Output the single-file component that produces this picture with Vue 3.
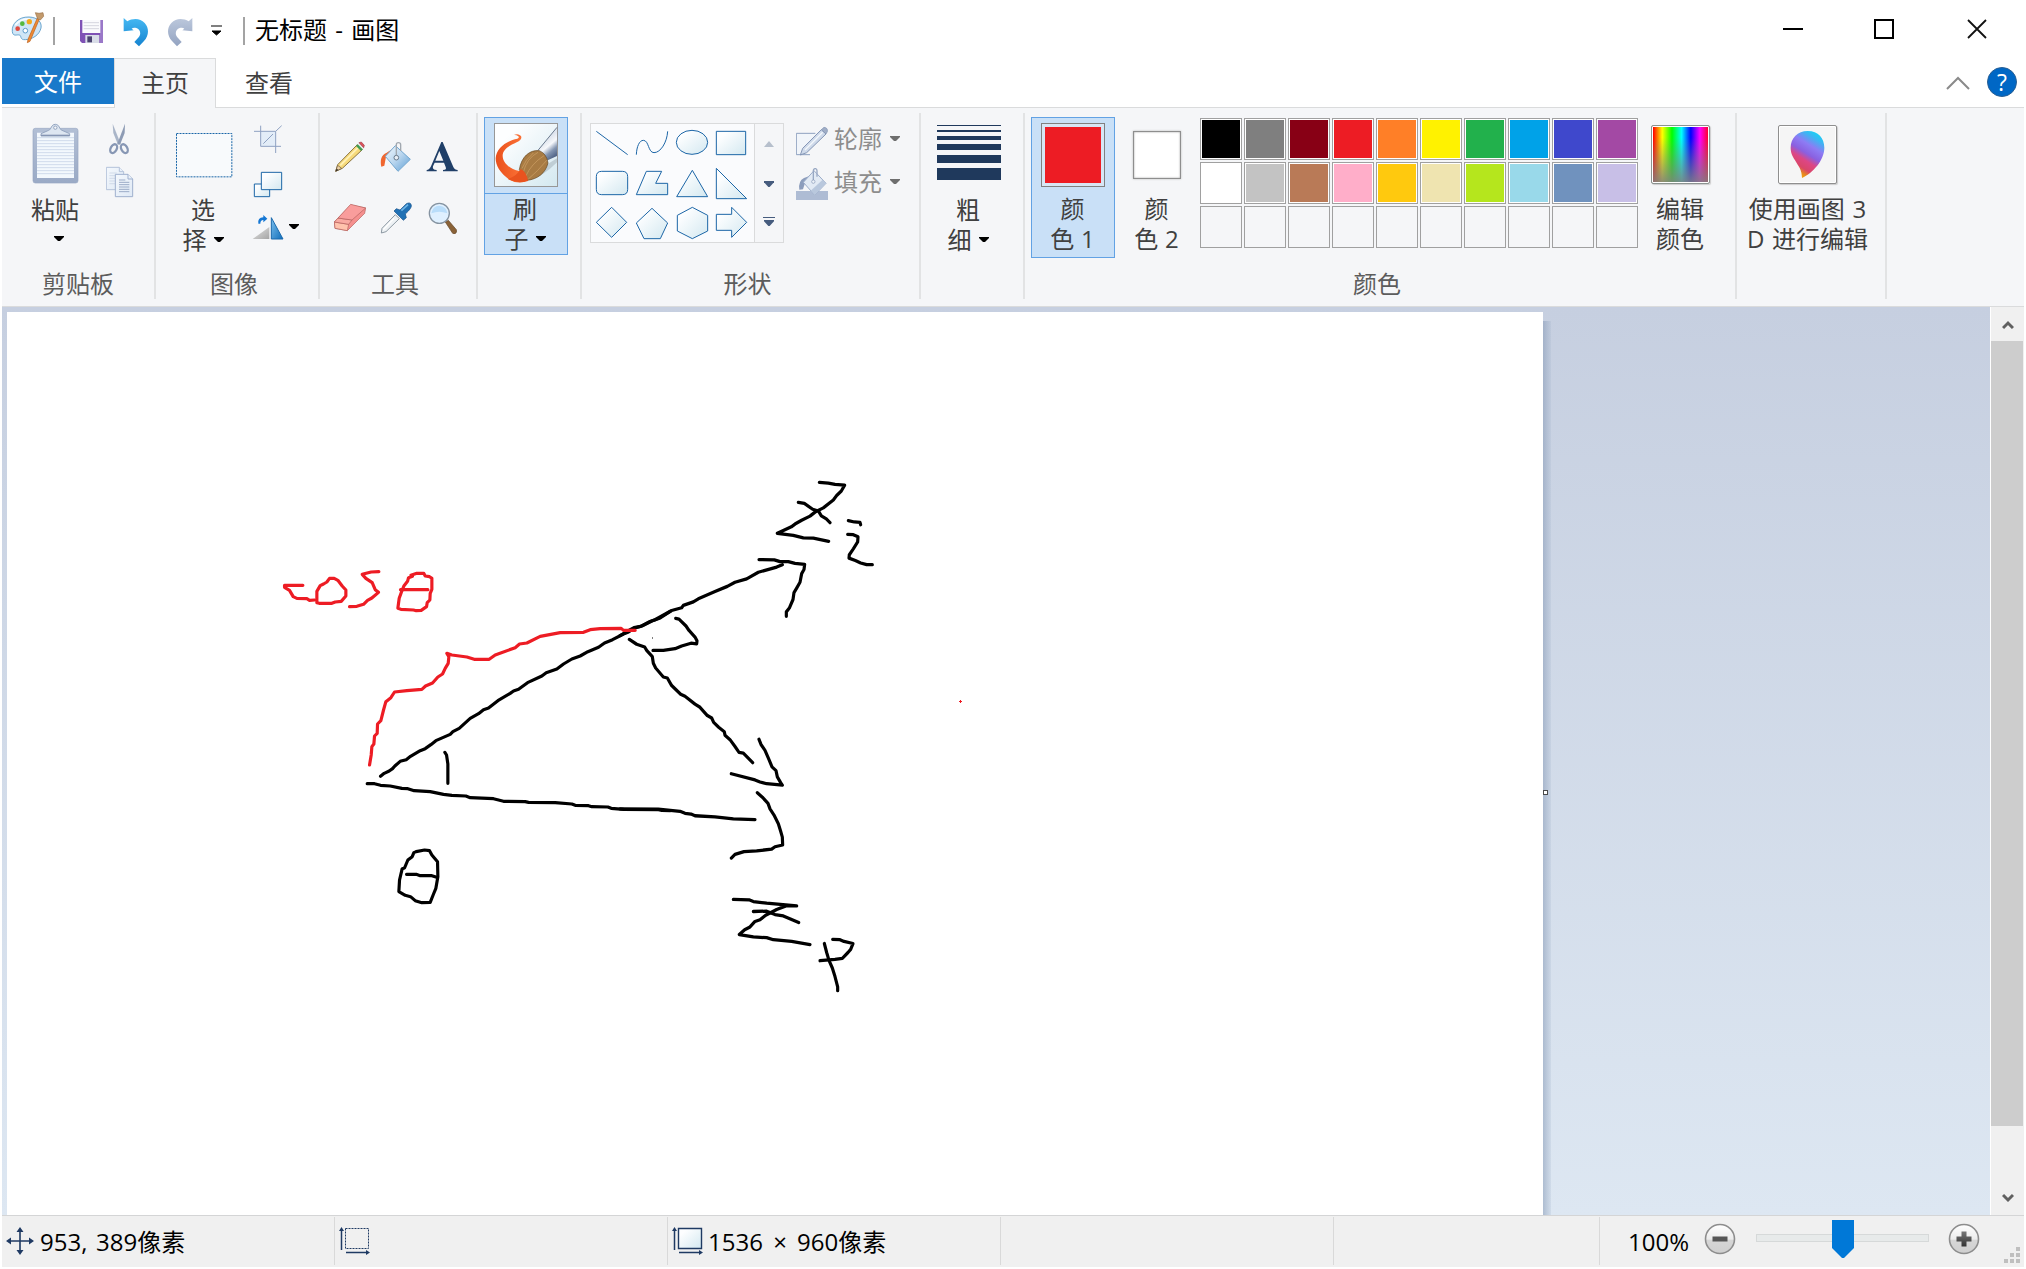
<script setup>
const shapes = [
  { box: '36 57 120 117', d: 'M49 79L143 149', open: true },
  { box: '156 57 120 117', d: 'M169 149C170 125 178 106 190 106C207 106 204 143 222 143C242 143 261 112 263 79', open: true },
  { box: '276 57 120 117', d: 'M289 112A47 36 0 1 1 383 112A47 36 0 1 1 289 112Z' },
  { box: '396 57 120 117', d: 'M409 79H497V149H409Z' },
  { box: '36 174 120 117', d: 'M65 199H127Q143 199 143 215V253Q143 269 127 269H65Q49 269 49 253V215Q49 199 65 199Z' },
  { box: '156 174 120 117', d: 'M199 199H245L227 235H263V269H169Z' },
  { box: '276 174 120 117', d: 'M337 196L383 275H290Z' },
  { box: '396 174 120 117', d: 'M409 190V281H500Z' },
  { box: '36 291 120 117', d: 'M95 307L140 352L95 397L49 352Z' },
  { box: '156 291 120 117', d: 'M216 310L263 354L241 401H192L169 354Z' },
  { box: '276 291 120 117', d: 'M337 307L383 331V378L337 401L292 378V331Z' },
  { box: '396 291 120 117', d: 'M409 328H455V307L500 352L455 397V376H409Z' },
]
const palette = [
  '#000000', '#7f7f7f', '#880015', '#ed1c24', '#ff7f27', '#fff200', '#22b14c', '#00a2e8', '#3f48cc', '#a349a4',
  '#ffffff', '#c3c3c3', '#b97a57', '#ffaec9', '#ffc90e', '#efe4b0', '#b5e61d', '#99d9ea', '#7092be', '#c8bfe7',
  '', '', '', '', '', '', '', '', '', '',
]
const leftInk = [
  '331,709 342,700 357,693 367,686 374,678 390,664 408,659 421,649 450,632 465,626 482,614 497,602 540,583 548,575 567,565 600,535 625,521 640,509 655,504 683,482 720,460 730,453 745,448 772,428 815,408 828,398 860,387 880,372 905,357 930,348 953,335 985,322 1003,309 1027,299 1060,282 1075,276 1091,265 1115,258 1145,243 1170,234 1200,214',
  '291,731 313,731 331,736 360,738 395,745 413,746 432,752 480,755 520,763 545,766 587,768 600,773 670,776 700,784 765,785 775,787 855,788 905,792 915,796 955,797 965,800 1013,801 1023,805 1060,808 1165,809 1175,811 1200,812',
  '524,637 529,645 533,672 533,730',
  '438,935 463,930 478,932 485,945 502,965 503,1010 497,1045 490,1062 480,1087 455,1088 435,1082 421,1070 405,1066 386,1055 388,1020 396,986 403,984 413,960 426,950 431,938 438,935',
  '409,1003 438,1003 450,1007 485,1007 497,1011',
]
const leftRed = [
  '98,136 43,136 43,142 58,151 69,170 80,175 110,176 118,181 133,180',
  '160,132 150,137 140,154 140,188 147,190 185,190 195,186 213,184 227,168 227,150 216,138 203,121 192,115 178,115 170,126 160,132',
  '326,95 303,96 276,103 287,115 306,128 315,149 325,157 305,174 292,181 280,193 260,199 238,200',
  '427,109 415,113 412,124 401,138 393,158 387,175 383,205 392,208 430,210 438,212 453,211 469,200 471,188 479,180 480,160 485,148 485,115 478,110 465,108 461,100 440,100 422,106',
  '391,149 473,149',
  '298,675 303,645 305,620 311,612 313,588 321,580 322,552 332,542 340,510 347,485 362,473 373,456 410,452 455,448 466,438 487,429 503,411 517,402 525,385 534,370 536,350 530,340 545,345 590,351 612,358 657,358 675,345 735,323 748,312 770,309 810,289 870,278 940,277 960,269 990,266 1053,265 1060,271 1095,271',
]
const rightInk = [
  '0,510 25,496 42,487 62,483 90,469 105,464 155,437 185,429 190,422 220,412 235,403 285,382 322,367 345,355 380,345 415,326 470,311 487,304',
  '417,289 463,290 480,295 505,295 525,300 554,303 552,318 545,330 540,355 530,372 522,385 519,405 508,430 499,441 499,454',
  '598,65 625,67 645,71 674,73 664,90 650,103 640,116 610,139 587,150 570,163 545,175 525,186 514,194 490,205 472,213 520,219 550,226 580,227 626,236',
  '535,123 553,126 578,143 595,148 604,162 619,171 630,182',
  '685,176 703,180 720,181 722,188',
  '683,216 700,217 714,223 713,238 700,258 688,275 687,285 706,292 722,299 740,304 757,304',
  '167,460 177,462 198,482 207,495 225,514 231,525 230,534 213,532 185,540 165,548 130,553 99,553',
  '28,521 50,535 74,543 80,553 97,571 100,590 107,604 130,630 142,633 155,655 182,680 195,686 225,709 240,718 262,742 275,749 281,762 296,776 313,789 315,799 330,812 345,832 357,849 370,851 398,879',
  '417,811 423,826 435,843 447,870 456,891 468,902 472,920 482,937 487,944 440,940 420,935 405,929 334,911',
  '412,966 427,979 444,997 450,1013 462,1031 475,1056 482,1078 487,1095 488,1118 465,1123 455,1130 410,1135 372,1137 345,1145 334,1156',
  '0,1013 115,1014 180,1020 195,1026 213,1028 225,1033 285,1036 340,1042 405,1044',
  '340,1276 387,1277 400,1282 440,1287 530,1295 500,1294 470,1305 437,1322 420,1335 405,1340 390,1356 374,1364 358,1378 400,1385 440,1387 460,1393 515,1398 570,1407',
  '400,1311 440,1310 465,1320 490,1324 536,1343',
  '613,1404 620,1430 627,1453 637,1475 645,1500 653,1530 653,1541',
  '638,1392 660,1393 672,1398 699,1404 692,1421 684,1430 667,1447 645,1450 600,1454',
]
</script>

<template>
  <div class="window">
    <svg class="defs" width="0" height="0">
      <defs>
        <linearGradient id="ice" x1="0" y1="0" x2="1" y2="1"><stop offset="0.2" stop-color="#fdfeff" /><stop offset="1" stop-color="#d3e8f0" /></linearGradient>
        <linearGradient id="paper" x1="0" y1="0" x2="1" y2="1"><stop offset="0" stop-color="#f4f8fd" /><stop offset="1" stop-color="#dfe9f5" /></linearGradient>
        <linearGradient id="board" x1="0" y1="0" x2="0" y2="1"><stop offset="0" stop-color="#b2bfd5" /><stop offset="1" stop-color="#9aaac6" /></linearGradient>
        <linearGradient id="blue" x1="0" y1="0" x2="1" y2="1"><stop offset="0" stop-color="#7cc0ee" /><stop offset="1" stop-color="#0f6db9" /></linearGradient>
        <linearGradient id="undo" x1="0" y1="0" x2="0" y2="1"><stop offset="0" stop-color="#45b8f2" /><stop offset="1" stop-color="#1583d0" /></linearGradient>
        <linearGradient id="redo" x1="0" y1="0" x2="0" y2="1"><stop offset="0" stop-color="#bcc8dc" /><stop offset="1" stop-color="#93a3c1" /></linearGradient>
        <linearGradient id="grey" x1="0" y1="0" x2="1" y2="1"><stop offset="0" stop-color="#e6e6e6" /><stop offset="1" stop-color="#a4a4a4" /></linearGradient>
        <linearGradient id="pail" x1="0" y1="0" x2="1" y2="1"><stop offset="0" stop-color="#f4f9fe" /><stop offset="0.5" stop-color="#b8d5ee" /><stop offset="1" stop-color="#5c9dd3" /></linearGradient>
        <linearGradient id="flame" x1="0" y1="0" x2="1" y2="0"><stop offset="0" stop-color="#ea501c" /><stop offset="1" stop-color="#ff7a3d" /></linearGradient>
        <linearGradient id="steel" gradientUnits="userSpaceOnUse" x1="700" y1="105" x2="738" y2="150"><stop offset="0.1" stop-color="#dfe5ee" /><stop offset="0.4" stop-color="#f6f8fb" /><stop offset="0.7" stop-color="#8496b2" /><stop offset="1" stop-color="#55688a" /></linearGradient>
        <linearGradient id="drop" x1="0.75" y1="0" x2="0.3" y2="1"><stop offset="0" stop-color="#12d6f5" /><stop offset="0.14" stop-color="#3cb6f3" /><stop offset="0.32" stop-color="#8d7cf4" /><stop offset="0.5" stop-color="#8a60e0" /><stop offset="0.64" stop-color="#dd4684" /><stop offset="0.8" stop-color="#d94668" /><stop offset="0.9" stop-color="#e88a1c" /><stop offset="1" stop-color="#f2a80c" /></linearGradient>
        <linearGradient id="knob" x1="0" y1="0" x2="0" y2="1"><stop offset="0" stop-color="#ffffff" /><stop offset="0.5" stop-color="#ececec" /><stop offset="0.55" stop-color="#d6d6d6" /><stop offset="1" stop-color="#cfcfcf" /></linearGradient>
        <linearGradient id="mark" x1="0" y1="0" x2="0" y2="1"><stop offset="0" stop-color="#777" /><stop offset="1" stop-color="#333" /></linearGradient>
      </defs>
    </svg>

    <header class="titlebar">
      <svg class="app-icon" width="34" height="34" viewBox="33 39 102 102">
        <path d="M37 101C34 78 55 56 87 57C114 58 126 73 123 90C118 112 96 124 76 125C58 126 66 113 58 111C50 109 39 117 37 101Z" fill="#cfe6f7" stroke="#6ba6cf" stroke-width="3" />
        <path d="M46 82Q62 60 90 63" fill="none" stroke="#f5fbff" stroke-width="5" />
        <circle cx="53" cy="92" r="7" fill="#e0473d" /><circle cx="67" cy="77" r="7" fill="#55b93f" /><circle cx="88" cy="71" r="8" fill="#f5a81c" /><circle cx="76" cy="98" r="7" fill="#fff" stroke="#5d9ccc" stroke-width="3" />
        <path d="M113 58L119 61L90 130L82 134L84 124Z" fill="#ef8a33" stroke="#b85d1a" stroke-width="2" />
        <path d="M113 63L108 50L106 44L117 46L129 44L131 55L121 66Z" fill="#c39a6c" stroke="#9b7248" stroke-width="2" />
      </svg>
      <i class="bar"></i>
      <svg class="save" width="24" height="24" viewBox="240 60 72 72">
        <path d="M240 60H309V129H246L240 123Z" fill="#7f52b5" /><path d="M300 60H309V129H300Z" fill="#9a78c8" />
        <path d="M247 60H301V99H247Z" fill="#fafafd" /><path d="M251 68H297M251 77H297M251 86H297" stroke="#d5d5df" stroke-width="3" />
        <path d="M256 105H298V129H256Z" fill="#d9dde8" /><path d="M262 109H276V127H262Z" fill="#4b4470" />
      </svg>
      <svg class="undo" width="26" height="30" viewBox="370 51 78 90"><path d="M372 54L383 64C398 55 421 53 435 69C450 86 447 108 433 123L418 139L404 126L417 112C426 101 421 88 410 84C404 82 399 83 396 86L402 91L372 94Z" fill="url(#undo)" /></svg>
      <svg class="redo" width="26" height="30" viewBox="501 51 78 90"><path d="M577 54L566 64C551 55 528 53 514 69C499 86 502 108 516 123L531 139L545 126L532 112C523 101 528 88 539 84C545 82 550 83 553 86L547 91L577 94Z" fill="url(#redo)" /></svg>
      <svg class="more" width="12" height="12" viewBox="0 0 12 12"><path d="M0 1H11M1 6H10L5.500 10Z" stroke="#000" fill="#000" stroke-width="1" /></svg>
      <i class="bar bar2"></i>
      <span class="title">无标题 - 画图</span>
      <svg class="controls" width="206" height="24" viewBox="0 0 206 24">
        <path d="M0 12H20" stroke="#000" stroke-width="2" /><path d="M92 3H110V21H92Z" fill="none" stroke="#000" stroke-width="2" /><path d="M185 3L203 21M203 3L185 21" stroke="#111" stroke-width="1.800" />
      </svg>
    </header>

    <nav class="tabs">
      <span class="tab file">文件</span>
      <span class="tab home">主页</span>
      <span class="tab view">查看</span>
      <svg class="fold" width="24" height="14" viewBox="0 0 24 14"><path d="M1 13L12 2L23 13" fill="none" stroke="#8a8a8a" stroke-width="2" /></svg>
      <span class="help">?</span>
    </nav>

    <section class="ribbon">
      <div class="group clipboard">
        <div class="body">
          <div class="col big paste">
            <svg width="48" height="62" viewBox="96 54 144 186">
              <rect x="99" y="70" width="135" height="164" rx="7" fill="url(#board)" stroke="#98a8c3" stroke-width="2" /><path d="M111 83H222V219H111Z" fill="#f3f8fd" />
              <path d="M111 98H222M111 107H222M111 116H222M111 125H222M111 134H222M111 143H222M111 152H222M111 161H222M111 170H222M111 179H222M111 188H222M111 197H222M111 206H222" stroke="#c7d4e6" stroke-width="2.500" />
              <path d="M123 93V86L146 76C154 74 153 58 166 58C179 58 178 74 186 76L209 86V93Z" fill="#dde6f1" stroke="#94a5c0" stroke-width="3" /><path d="M123 89H209V93H123Z" fill="#8595b3" /><circle cx="166" cy="68" r="5" fill="#f5f6f8" stroke="#94a5c0" stroke-width="3" />
            </svg>
            <span class="txt">粘贴</span>
            <span class="txt"><svg class="arr solo" width="10" height="5" viewBox="0 0 10 5"><path d="M0 0H10V1L6 5H4L0 1Z" /></svg></span>
          </div>
          <div class="col minis">
            <svg width="28" height="33" viewBox="318 51 84 99">
              <path d="M338 56L362 116L354 119L340 84Z" fill="#a9b5c8" /><path d="M375 56L352 116L360 119L374 84Z" fill="#8d9bb4" />
              <g fill="none" stroke="#8797b4" stroke-width="7"><ellipse cx="341" cy="131" rx="9" ry="14" transform="rotate(28 341 131)" /><ellipse cx="373" cy="131" rx="9" ry="14" transform="rotate(-28 373 131)" /></g>
            </svg>
            <svg class="copy" width="28" height="32" viewBox="318 183 84 96">
              <g fill="url(#paper)" stroke="#b4c2da" stroke-width="3"><path d="M319 187H358L371 200V254H319Z" /><path d="M358 187V200H371" /></g>
              <path d="M328 204H350M328 212H345M328 220H345M328 228H345M328 236H345" stroke="#c2cfe1" stroke-width="2" />
              <g fill="url(#paper)" stroke="#9fb0ce" stroke-width="3"><path d="M346 208H384L398 222V275H346Z" /><path d="M384 208V222H398" /></g>
              <path d="M357 225H376M357 232H388M357 239H388M357 246H388M357 253H388M357 260H388" stroke="#8c9dbd" stroke-width="2.500" />
            </svg>
          </div>
        </div>
        <div class="label">剪贴板</div>
      </div>
      <i class="sep"></i>

      <div class="group image">
        <div class="body">
          <div class="col big select">
            <svg width="58" height="62" viewBox="525 54 174 186"><path d="M529.500 85.500H695.500V215.500H529.500Z" fill="#f8fafc" stroke="#1a66a8" stroke-width="3" stroke-dasharray="6 3" /></svg>
            <span class="txt">选</span>
            <span class="txt">择<svg class="arr" width="10" height="5" viewBox="0 0 10 5"><path d="M0 0H10V1L6 5H4L0 1Z" /></svg></span>
          </div>
          <div class="col tools3">
            <svg width="30" height="30" viewBox="759 60 90 90"><path d="M782 79H827V124H782Z" fill="#e3edf8" /><path d="M762 79H827V144M782 62V124H843M827 79L845 62M790 116L819 87" fill="none" stroke="#8fa2c2" stroke-width="3" /></svg>
            <svg class="resize" width="30" height="30" viewBox="759 195 90 90"><g fill="url(#ice)" stroke="#1c66a7" stroke-width="3"><path d="M763 237H809V275H763Z" /><path d="M784 202H845V254H784Z" /></g></svg>
            <span class="rotate">
              <svg width="34" height="28" viewBox="756 324 102 84"><path d="M758 402L808 366V402Z" fill="url(#grey)" /><path d="M814 338L849 402H814Z" fill="url(#blue)" stroke="#1a69ad" stroke-width="3" /><path d="M775 356Q772 338 790 337V330L802 341L790 352V345Q781 345 781 356Z" fill="#1477d4" /></svg>
              <svg class="arr" width="10" height="5" viewBox="0 0 10 5"><path d="M0 0H10V1L6 5H4L0 1Z" /></svg>
            </span>
          </div>
        </div>
        <div class="label shifted">图像</div>
      </div>
      <i class="sep"></i>

      <div class="group tools">
        <div class="body">
          <div class="toolgrid">
            <svg viewBox="72 108 96 96"><path d="M77 199L83 179L142 119L157 134L97 190Z" fill="#f7da7a" stroke="#8a7340" stroke-width="3" /><path d="M91 181L148 124" stroke="#fff2b8" stroke-width="5" /><path d="M77 199L83 181L95 190Z" fill="#ecd2aa" stroke="#6b5637" stroke-width="2" /><path d="M77 199L80 191L85 195Z" fill="#222" /><path d="M138 123L145 116L160 131L153 138Z" fill="#3f9c52" /><path d="M143 118L148 113L163 128L158 133Z" fill="#e8e8e8" /><path d="M147 113L154 111L163 121L161 128Z" fill="#e0525c" stroke="#9c4047" stroke-width="2" /></svg>
            <svg viewBox="208 105 96 96"><path d="M228 140C239 132 247 131 252 126L240 144L226 152L221 179L212 182C208 163 211 146 228 140Z" fill="#f0662f" /><path d="M254 119L299 160L262 196L224 151Z" fill="url(#pail)" stroke="#72a6d0" stroke-width="3" /><path d="M257 149V116Q257 110 263 110Q270 110 270 116V135" fill="none" stroke="#a1a8b0" stroke-width="4" /><circle cx="257" cy="155" r="7" fill="#e8eef5" stroke="#687a8c" stroke-width="3" /></svg>
            <svg viewBox="346 108 96 96"><path d="M396 111L428 186Q432 195 441 195V199H397V195Q409 195 405 186L400 173H372L367 184Q364 195 378 195V199H348V195Q356 195 361 184L392 111ZM386 138L374 167H398Z" fill="#203f68" /></svg>
            <svg viewBox="72 291 96 96"><g stroke="#b3605e" stroke-width="2"><path d="M73 351L122 300L167 309L164 325L112 377L75 370Z" fill="#f5908f" /><path d="M73 351L116 358L112 377L75 370Z" fill="#ffc3ad" /><path d="M73 351L84 339L126 345L116 358Z" fill="#f9aaa2" /><path d="M84 339L122 298L167 309L126 345Z" fill="#f99d9c" /></g></svg>
            <svg viewBox="208 291 96 96"><path d="M212 384L214 370L254 329L266 341L226 380Z" fill="#eef2f5" stroke="#8c98a2" stroke-width="3" /><path d="M218 374L250 340" stroke="#fff" stroke-width="4" /><path d="M250 318L257 311L268 315L287 296Q300 290 302 301Q304 309 284 327L287 338L278 346Z" fill="#2071b5" stroke="#124f88" stroke-width="2" /><path d="M272 317L292 299" stroke="#6db4e6" stroke-width="5" /></svg>
            <svg viewBox="346 291 96 96"><path d="M404 351L413 346L437 374Q440 382 432 387L426 385Z" fill="#8a6238" stroke="#614223" stroke-width="2" /><circle cx="386" cy="325" r="30" fill="#dff0ff" stroke="#8593a1" stroke-width="4" /><path d="M362 325Q366 303 386 302Q408 304 410 325Q386 315 362 325Z" fill="#b9ddfa" /></svg>
          </div>
        </div>
        <div class="label shifted">工具</div>
      </div>
      <i class="sep"></i>

      <div class="group brushes">
        <div class="brush">
          <div class="brush-top">
            <svg width="64" height="64" viewBox="552 54 192 192">
              <rect x="553.500" y="55.500" width="189" height="189" fill="url(#ice)" stroke="#979797" stroke-width="3" />
              <path d="M656 226Q700 214 741 172V160L700 185Z" fill="#9fadb5" opacity="0.500" />
              <path d="M612 90Q624 84 633 93Q638 103 620 112C596 123 578 134 578 152C578 172 598 192 628 198L646 192L654 226Q626 240 598 224C570 204 557 182 557 160C559 130 588 108 622 101Q629 98 625 94Q619 89 612 90Z" fill="url(#flame)" />
              <path d="M684 136L741 67V153L713 166Z" fill="url(#steel)" /><path d="M684 136L741 67" stroke="#6b7b8f" stroke-width="3" />
              <path d="M628 194C634 156 658 134 688 137Q710 146 714 174C706 206 682 222 652 226Z" fill="#a87b43" stroke="#644620" stroke-width="2" />
              <path d="M640 202Q650 160 684 142M647 214Q664 176 702 152M655 222Q684 198 710 166M636 190Q646 164 670 144" fill="none" stroke="#cfa266" stroke-width="2" />
              <path d="M632 192Q650 200 654 228Q622 238 594 222Q620 214 632 192Z" fill="#e9531f" />
            </svg>
          </div>
          <span class="txt">刷</span>
          <span class="txt">子<svg class="arr" width="10" height="5" viewBox="0 0 10 5"><path d="M0 0H10V1L6 5H4L0 1Z" /></svg></span>
        </div>
      </div>
      <i class="sep"></i>

      <div class="group shapes">
        <div class="body">
          <div class="gallery">
            <div class="shape-grid">
              <svg v-for="s in shapes" :key="s.d" width="40" height="39" :viewBox="s.box"><path :d="s.d" :fill="s.open ? 'none' : 'url(#ice)'" stroke="#1c66a7" stroke-width="3" /></svg>
            </div>
            <svg class="scroller" width="28" height="118" viewBox="525 57 84 354"><path d="M552 126L567 108L582 126Z" fill="#b6bfcc" /><path d="M552 228H582V232L569 246H565L552 232Z" fill="#465c7e" /><path d="M549 336H585V339H549ZM552 345H582V349L569 363H565L552 349Z" fill="#465c7e" /></svg>
          </div>
          <div class="options">
            <span class="option">
              <svg width="33" height="33" viewBox="648 60 99 99"><path d="M649 85H706L663 149H649Z" fill="#f1f5fa" /><path d="M706 85H649V149H690" fill="none" stroke="#8ea1c0" stroke-width="3" /><path d="M661 150L668 130L724 74L738 87L680 143Z" fill="#cfdaea" stroke="#8496b6" stroke-width="3" /><path d="M675 135L728 82" stroke="#f3f7fc" stroke-width="4" /><path d="M724 74L732 67Q744 68 742 80L738 87Z" fill="#a0aec7" stroke="#7f91b1" stroke-width="2" /></svg>
              <span class="opt-text">轮廓</span><svg class="arr dim" width="10" height="5" viewBox="0 0 10 5"><path d="M0 0H10V1L6 5H4L0 1Z" /></svg>
            </span>
            <span class="option fill">
              <svg width="33" height="33" viewBox="648 186 99 99"><path d="M648 255H744V282H648Z" fill="#aebcd4" /><path d="M672 216Q690 210 696 204L676 228L669 250L658 251Q654 225 672 216Z" fill="#8c9dbc" /><path d="M702 194L738 232L704 267L670 229Z" fill="#e2eaf4" stroke="#9aabc8" stroke-width="3" /><path d="M738 232L704 267L692 254L728 221Z" fill="#b9c8dd" /><path d="M700 222V194Q701 187 707 188Q711 189 711 194V212" fill="none" stroke="#98a8c3" stroke-width="4" /><circle cx="700" cy="227" r="5" fill="#eef3f9" stroke="#8697b5" stroke-width="2" /></svg>
              <span class="opt-text">填充</span><svg class="arr dim" width="10" height="5" viewBox="0 0 10 5"><path d="M0 0H10V1L6 5H4L0 1Z" /></svg>
            </span>
          </div>
        </div>
        <div class="label shifted">形状</div>
      </div>
      <i class="sep"></i>

      <div class="group size">
        <div class="body">
          <div class="col big">
            <svg width="64" height="62" viewBox="81 54 192 186"><path d="M81 60H273V63H81ZM81 75H273V81H81ZM81 93H273V105H81ZM81 117H273V135H81ZM81 150H273V174H81ZM81 189H273V225H81Z" fill="#1f395c" /></svg>
            <span class="txt">粗</span>
            <span class="txt">细<svg class="arr" width="10" height="5" viewBox="0 0 10 5"><path d="M0 0H10V1L6 5H4L0 1Z" /></svg></span>
          </div>
        </div>
      </div>
      <i class="sep"></i>

      <div class="group colors">
        <div class="body">
          <div class="current active"><i class="swatch primary"></i><span class="txt">颜</span><span class="txt">色 1</span></div>
          <div class="current"><i class="swatch secondary"></i><span class="txt">颜</span><span class="txt">色 2</span></div>
          <div class="palette">
            <i v-for="(c, i) in palette" :key="i" :class="['cell', { empty: !c }]" :style="c ? { backgroundColor: c } : null"></i>
          </div>
          <div class="edit"><i class="spectrum"></i><span class="txt">编辑</span><span class="txt">颜色</span></div>
        </div>
        <div class="label shifted">颜色</div>
      </div>
      <i class="sep"></i>

      <div class="group paint3d">
        <div class="edit">
          <i class="frame"><svg width="35" height="49" viewBox="451 390 105 147"><path d="M504 393C536 393 554 415 554 443C554 481 520 518 487 534C486 508 479 503 466 481C456 465 453 456 453 443C453 415 474 393 504 393Z" fill="url(#drop)" /></svg></i>
          <span class="txt wide">使用画图 3</span><span class="txt wide">D 进行编辑</span>
        </div>
      </div>
      <i class="sep"></i>
    </section>

    <main class="workspace">
      <div class="desk">
        <svg class="canvas" width="1536" height="903" viewBox="7 312 1536 903">
          <g transform="translate(270.200 540) scale(0.333333)" class="ink"><polyline v-for="p in leftInk" :key="p" :points="p" /></g>
          <g transform="translate(620 460) scale(0.333333 0.344388)" class="ink"><polyline v-for="p in rightInk" :key="p" :points="p" /></g>
          <g transform="translate(270.200 540) scale(0.333333)" class="ink red"><polyline v-for="p in leftRed" :key="p" :points="p" /></g>
          <rect x="652" y="637.500" width="1" height="1" fill="#000" />
          <path d="M959 701.500H962M960.500 700V703" stroke="#ed1c24" stroke-width="1" />
        </svg>
        <div class="edge"><i class="handle"></i></div>
      </div>
      <div class="scrollbar">
        <svg width="12" height="10" viewBox="0 0 12 10"><path d="M1 8L6 3L11 8" fill="none" stroke="#606060" stroke-width="3" /></svg>
        <i class="thumb"></i>
        <svg class="down" width="12" height="10" viewBox="0 0 12 10"><path d="M1 2L6 7L11 2" fill="none" stroke="#606060" stroke-width="3" /></svg>
      </div>
    </main>

    <footer class="status">
      <div class="cell-s first">
        <svg width="28" height="28" viewBox="0 0 28 28"><path d="M14 3V25M3 14H25" stroke="#1f3a63" stroke-width="1.600" /><path d="M14 0L17.500 5H10.500ZM14 28L17.500 23H10.500ZM0 14L5 10.500V17.500ZM28 14L23 10.500V17.500Z" fill="#1f3a63" /></svg>
        <span class="pos">953, 389像素</span>
      </div>
      <div class="cell-s sel">
        <svg width="31" height="28" viewBox="0 0 31 28"><path d="M6.500 1.500H29.500V21.500H6.500Z" fill="none" stroke="#1f3a63" stroke-dasharray="2 1" /><path d="M2.500 3V23M7 25.500H28" stroke="#1f3a63" stroke-width="1.500" /><path d="M2.500 0L5 4H0ZM31 25.500L27 28V23Z" fill="#1f3a63" /></svg>
      </div>
      <div class="cell-s dims">
        <svg width="31" height="28" viewBox="0 0 31 28"><path d="M6.500 1.500H29.500V21.500H6.500Z" fill="url(#ice)" stroke="#1f3a63" stroke-width="1.400" /><path d="M2.500 3V23M7 25.500H28" stroke="#1f3a63" stroke-width="1.500" /><path d="M2.500 0L5 4H0ZM31 25.500L27 28V23Z" fill="#1f3a63" /></svg>
        <span class="pos">1536 × 960像素</span>
      </div>
      <div class="cell-s gap1"></div>
      <div class="cell-s gap2"></div>
      <div class="zoom">
        <span class="pct">100%</span>
        <svg class="minus" width="32" height="32" viewBox="0 0 32 32"><circle cx="16" cy="16" r="14.500" fill="url(#knob)" stroke="#8d8d8d" stroke-width="1.600" /><rect x="8.500" y="13.500" width="15" height="5" fill="#565656" /></svg>
        <div class="track"><svg class="pin" width="22" height="38" viewBox="0 0 22 38"><path d="M0 0H22V28L12 38H10L0 28Z" fill="#0078d7" /></svg></div>
        <svg class="plus" width="32" height="32" viewBox="0 0 32 32"><circle cx="16" cy="16" r="14.500" fill="url(#knob)" stroke="#8d8d8d" stroke-width="1.600" /><path d="M13.500 8.500H18.500V13.500H23.500V18.500H18.500V23.500H13.500V18.500H8.500V13.500H13.500Z" fill="url(#mark)" /></svg>
        <svg class="grip" width="16" height="16" viewBox="0 0 16 16"><path d="M12 0H16V4H12ZM6 6H10V10H6ZM12 6H16V10H12ZM0 12H4V16H0ZM6 12H10V16H6ZM12 12H16V16H12Z" fill="#bfbfbf" /></svg>
      </div>
    </footer>
  </div>
</template>

<style>
body { margin: 0; background: #fff; }
</style>

<style scoped>
.window { box-sizing: border-box; width: 2026px; height: 1269px; padding: 0 2px 2px; display: flex; flex-direction: column; overflow: hidden; background: #fff; font-family: "Open Sans", "Noto Sans CJK SC", sans-serif; font-size: 24px; color: #404040; }
.window * { box-sizing: border-box; }
.window svg { display: block; flex: none; }
.window .defs { position: absolute; }
i { display: block; flex: none; }

.titlebar { height: 58px; flex: none; display: flex; align-items: center; padding: 4px 31px 0 9px; }
.bar { width: 2px; height: 28px; background: #a3a3a3; margin-left: 8px; }
.app-icon { margin-top: -6px; }
.save { margin-left: 25px; margin-top: 2px; }
.undo { margin-left: 19px; margin-top: 2px; }
.redo { margin-left: 18px; margin-top: 2px; }
.more { margin-left: 18px; }
.bar2 { margin-left: 20px; }
.title { margin-left: 10px; margin-top: -3px; color: #000; white-space: pre; line-height: 30px; word-spacing: 2px; }
.controls { margin-left: auto; margin-top: -5px; margin-right: 4px; }

.tabs { height: 50px; flex: none; display: flex; align-items: flex-start; box-shadow: inset 0 -1px #dadbdc; }
.tab { line-height: 50px; text-align: center; }
.file { width: 112px; height: 46px; line-height: 47px; background: #1979ca; color: #fff; }
.home { width: 102px; height: 50px; line-height: 48px; border: 1px solid #dadbdc; border-bottom: 0; background: #f5f6f8; }
.view { margin-left: 29px; }
.fold { margin: 18px 0 0 auto; }
.help { width: 30px; height: 30px; margin: 9px 7px 0 17px; border-radius: 50%; border: 1px solid #2a5f93; background: #0067c5; color: #fff; font-size: 23px; line-height: 28px; text-align: center; }

.ribbon { height: 199px; flex: none; display: flex; background: #f5f6f8; border-bottom: 1px solid #dadbdc; }
.sep { width: 2px; height: 186px; margin-top: 5px; background: #e2e3e4; }
.group { flex: none; }
.body { height: 160px; display: flex; align-items: flex-start; }
.label { line-height: 32px; text-align: center; color: #5c5c5c; }
.shifted { padding-right: 6px; }
.txt { display: flex; align-items: center; justify-content: center; height: 30px; line-height: 30px; white-space: pre; }
.arr { fill: #000; margin-left: 7px; margin-top: -1px; }
.arr.solo { margin-left: 7px; margin-top: -3px; }
.arr.dim { fill: #6e6e6e; }
.col { display: flex; flex-direction: column; align-items: center; }
.big { padding-top: 15px; }
.big .txt:nth-child(2) { margin-top: 10px; }

.clipboard { width: 152px; }
.paste { width: 84px; margin-left: 11px; }
.paste > svg { margin-left: 2px; }
.minis { margin-left: 9px; padding-top: 14px; }
.copy { margin-top: 11px; }

.image { width: 162px; }
.select { width: 84px; margin-left: 5px; }
.select > svg { margin-left: 2px; }
.tools3 { margin-left: 8px; padding-top: 17px; align-items: flex-start; }
.resize { margin-top: 15px; }
.rotate { display: flex; align-items: center; margin-top: 13px; margin-left: -1px; }
.rotate .arr { margin-left: 3px; margin-top: -2px; }

.tools { width: 156px; }
.toolgrid { display: grid; grid-template-columns: repeat(3, 32px); grid-auto-rows: 32px; gap: 29px 14px; margin: 33px 0 0 14px; }

.brushes { width: 102px; padding: 9px 0 0 6px; }
.brush { width: 84px; height: 138px; border: 1px solid #62a2e4; background: #c9e0f7; }
.brush-top { height: 76px; padding: 5px 0 0 9px; border-bottom: 1px solid #62a2e4; }
.brush .txt { padding-right: 2px; }

.shapes { width: 337px; }
.gallery { display: flex; width: 194px; height: 120px; margin: 15px 0 0 8px; border: 1px solid #dadbdc; background: #fafbfd; }
.shape-grid { display: grid; grid-template-columns: repeat(4, 40px); grid-auto-rows: 39px; width: 164px; padding-left: 1px; border-right: 1px solid #dadbdc; }
.scroller { background: #f5f6f8; }
.options { margin-left: 12px; padding-top: 17px; color: #8d8d8d; }
.option { display: flex; align-items: center; height: 33px; }
.option > svg:first-child { margin-right: 5px; }
.opt-text { line-height: 28px; margin-bottom: 5px; }
.option .arr { margin-left: 8px; margin-top: -7px; }
.option.fill { margin-top: 10px; }

.size { width: 102px; }
.size .col { width: 84px; margin-left: 6px; }
.size .txt { padding-right: 2px; }

.colors { width: 710px; }
.current { width: 84px; height: 141px; margin: 9px 0 0 6px; padding-top: 5px; border: 1px solid transparent; display: flex; flex-direction: column; align-items: center; }
.current .txt { padding-right: 1px; word-spacing: 0.5px; }
.current + .current { margin-left: 0; }
.active { border-color: #62a2e4; background: #c9e0f7; }
.swatch { width: 64px; height: 64px; border: 1px solid #808080; margin-bottom: 7px; }
.primary { background: #ed1c24; box-shadow: inset 0 0 0 3px #d7e6f5; }
.secondary { width: 48px; height: 48px; margin: 8px 0 15px; border-color: #8e8e8e; background: #fff; box-shadow: inset 0 0 2px #999, 0 0 2px #bbb; }
.palette { display: grid; grid-template-columns: repeat(10, 42px); grid-auto-rows: 42px; gap: 2px; margin: 10px 0 0 1px; }
.cell { border: 1px solid #a0a0a0; box-shadow: inset 0 0 0 1px #fff; }
.cell.empty { box-shadow: none; }
.edit { display: flex; flex-direction: column; align-items: center; padding-top: 17px; }
.colors .edit { width: 60px; margin-left: 12px; }
.spectrum { width: 59px; height: 59px; border: 1px solid #8b9390; border-radius: 2px; box-shadow: inset 0 0 0 1px #fff, 1px 1px 1px #ccc; margin-bottom: 10px; background: linear-gradient(to bottom, rgba(128, 128, 128, 0) 20%, rgba(128, 128, 128, 0.9)), linear-gradient(to right, #f00 2%, #ff0 18%, #0f0 35%, #0ff 52%, #00f 68%, #f0f 84%, #f03 98%); }
.paint3d { width: 148px; }
.paint3d .edit { padding-right: 7px; }
.wide { word-spacing: 1.500px; }
.frame { width: 59px; height: 59px; border: 1px solid #8f8f8f; border-radius: 2px; box-shadow: inset 0 0 0 1px #fff, 1px 1px 1px #ccc; background: #f5f5f5; margin-bottom: 10px; display: flex; justify-content: center; padding-top: 4px; }

.workspace { flex: 1; min-height: 0; display: flex; background: linear-gradient(#c6cfe0, #dde7f2); }
.desk { flex: 1; display: flex; padding: 5px 0 0 5px; }
.canvas { background: #fff; }
.edge { width: 8px; margin-top: 9px; background: linear-gradient(to right, rgba(135, 154, 182, 0.55), rgba(160, 178, 202, 0.2)); }
.handle { width: 5px; height: 5px; margin-top: 469px; border: 1px solid #4a4a4a; background: #fff; }
.scrollbar { width: 34px; display: flex; flex-direction: column; align-items: center; padding-top: 13px; background: #f0f0f0; border-left: 1px solid #fff; }
.thumb { align-self: stretch; height: 785px; margin-top: 11px; background: #cdcdcd; margin-right: 1px; }
.down { margin-top: auto; margin-bottom: 12px; }
.ink { fill: none; stroke: #000; stroke-width: 9.500; stroke-linecap: round; stroke-linejoin: round; }
.red { stroke: #ed1c24; }

.status { height: 52px; flex: none; display: flex; background: #f0f0f0; border-top: 1px solid #d4d5d6; color: #000; }
.cell-s { height: 48px; margin-top: 1px; display: flex; align-items: center; border-right: 1px solid #d9d9d9; white-space: pre; }
.pos { line-height: 48px; padding-top: 2px; word-spacing: 2.500px; }
.first { width: 333px; padding-left: 4px; }
.first .pos { margin-left: 6px; }
.sel, .dims { width: 333px; padding-left: 4px; }
.dims .pos { margin-left: 5px; word-spacing: 4px; }
.gap1 { width: 333px; }
.gap2 { width: 266px; }
.zoom { flex: 1; display: flex; align-items: flex-start; }
.pct { margin-left: 28px; line-height: 52px; width: 62px; }
.minus { margin: 7px 0 0 14px; }
.track { width: 173px; height: 8px; margin: 18px 0 0 20px; border: 1px solid #d6d9d9; background: #e7eaea; position: relative; }
.pin { position: absolute; left: 75px; top: -15px; }
.plus { margin: 7px 0 0 19px; }
.grip { margin: 31px 4px 0 auto; }
</style>
